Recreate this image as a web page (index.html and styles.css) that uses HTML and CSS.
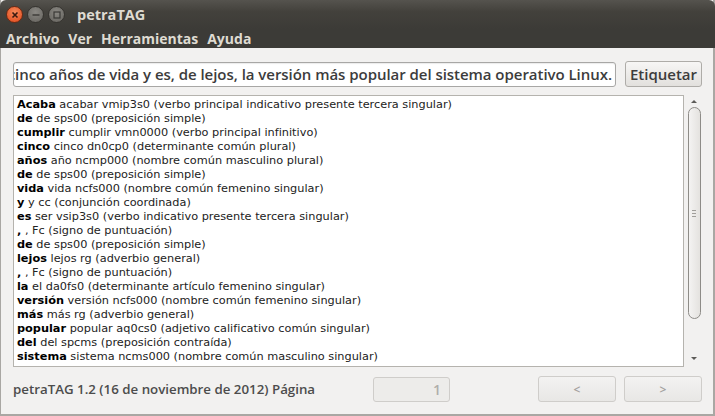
FILE: index.html
```html
<!DOCTYPE html>
<html lang="es">
<head>
  <meta charset="UTF-8">
  <title>petraTAG</title>
  <link rel="stylesheet" href="styles.css">
</head>
<body>
  <div class="window">
    <div class="titlebar">
      <div class="controls">
        <span class="ctl close">
          <svg width="8" height="8" viewBox="0 0 8 8"><path d="M1.5 1.5 L6.5 6.5 M6.5 1.5 L1.5 6.5" stroke="#3a1a10" stroke-width="1.6"/></svg>
        </span>
        <span class="ctl">
          <svg width="8" height="8" viewBox="0 0 8 8"><path d="M0.5 4 H7.5" stroke="#3a3936" stroke-width="1.4"/></svg>
        </span>
        <span class="ctl">
          <svg width="8" height="8" viewBox="0 0 8 8"><rect x="1" y="1" width="6" height="6" fill="none" stroke="#3a3936" stroke-width="1.2"/></svg>
        </span>
      </div>
      <div class="title">petraTAG</div>
    </div>

    <div class="menubar">
      <span>Archivo</span>
      <span>Ver</span>
      <span>Herramientas</span>
      <span>Ayuda</span>
    </div>

    <div class="content">
      <div class="entry-row">
        <div class="entry"><span>Acaba de cumplir cinco años de vida y es, de lejos, la versión más popular del sistema operativo Linux.</span></div>
        <button class="btn">Etiquetar</button>
      </div>

      <div class="text-row">
        <div class="textview">
          <div><b>Acaba</b> acabar vmip3s0 (verbo principal indicativo presente tercera singular)</div>
          <div><b>de</b> de sps00 (preposición simple)</div>
          <div><b>cumplir</b> cumplir vmn0000 (verbo principal infinitivo)</div>
          <div><b>cinco</b> cinco dn0cp0 (determinante común plural)</div>
          <div><b>años</b> año ncmp000 (nombre común masculino plural)</div>
          <div><b>de</b> de sps00 (preposición simple)</div>
          <div><b>vida</b> vida ncfs000 (nombre común femenino singular)</div>
          <div><b>y</b> y cc (conjunción coordinada)</div>
          <div><b>es</b> ser vsip3s0 (verbo indicativo presente tercera singular)</div>
          <div><b>,</b> , Fc (signo de puntuación)</div>
          <div><b>de</b> de sps00 (preposición simple)</div>
          <div><b>lejos</b> lejos rg (adverbio general)</div>
          <div><b>,</b> , Fc (signo de puntuación)</div>
          <div><b>la</b> el da0fs0 (determinante artículo femenino singular)</div>
          <div><b>versión</b> versión ncfs000 (nombre común femenino singular)</div>
          <div><b>más</b> más rg (adverbio general)</div>
          <div><b>popular</b> popular aq0cs0 (adjetivo calificativo común singular)</div>
          <div><b>del</b> del spcms (preposición contraída)</div>
          <div><b>sistema</b> sistema ncms000 (nombre común masculino singular)</div>
        </div>
        <div class="scrollbar">
          <span class="arrow up"></span>
          <div class="slider"><span class="grip"></span></div>
          <span class="arrow down"></span>
        </div>
      </div>

      <div class="footer">
        <div class="status">petraTAG 1.2 (16 de noviembre de 2012) Página</div>
        <div class="spin">1</div>
        <div class="nav">
          <button class="btn nav-btn">&lt;</button>
          <button class="btn nav-btn">&gt;</button>
        </div>
      </div>
    </div>
  </div>
</body>
</html>
```

FILE: styles.css
```css
* {
  margin: 0;
  padding: 0;
  box-sizing: border-box;
}

body {
  width: 715px;
  height: 416px;
  background: #f2f1f0;
  font-family: 'Open Sans', 'DejaVu Sans', sans-serif;
  overflow: hidden;
}

.window {
  width: 715px;
  height: 416px;
  display: flex;
  flex-direction: column;
  border-left: 1px solid #a9a7a3;
  border-right: 2px solid #a9a7a3;
  border-bottom: 2px solid #a9a7a3;
  background: #f2f1f0;
}

.titlebar {
  height: 29px;
  display: flex;
  align-items: center;
  background: linear-gradient(#55534e, #43413c 40%, #3c3b37);
  border-radius: 6px 6px 0 0;
  color: #dfdbd2;
  margin-left: -1px;
  margin-right: -2px;
  padding-left: 6px;
}

.controls {
  display: flex;
  gap: 4px;
}

.ctl {
  width: 17px;
  height: 17px;
  border-radius: 50%;
  display: flex;
  align-items: center;
  justify-content: center;
  background: radial-gradient(circle at 50% 35%, #8a8883, #64625d);
  border: 1px solid #35332f;
}

.ctl.close {
  background: radial-gradient(circle at 50% 35%, #f58a5a, #e0471a);
  border-color: #6a2a14;
}

.title {
  margin-left: 12px;
  font-size: 14.5px;
  font-weight: 700;
}

.menubar {
  height: 19px;
  display: flex;
  align-items: center;
  gap: 9px;
  padding-left: 6px;
  background: #3c3b37;
  color: #dfdbd2;
  font-size: 14px;
  font-weight: 700;
  margin-left: -1px;
  margin-right: -2px;
}

.content {
  flex: 1;
  display: flex;
  flex-direction: column;
  padding: 13px 11px 0 12px;
}

.entry-row {
  display: flex;
  align-items: center;
  gap: 9px;
}

.entry {
  flex: 1;
  height: 25px;
  border: 1px solid #a8a7a5;
  border-radius: 3px;
  background: #fff;
  box-shadow: inset 0 1px 1px rgba(0, 0, 0, 0.08);
  overflow: hidden;
  display: flex;
  justify-content: flex-end;
  align-items: center;
  padding-right: 3px;
  font-size: 15px;
  font-weight: 600;
  letter-spacing: -0.04px;
  color: #3c3c3c;
  white-space: nowrap;
}

.btn {
  width: 77px;
  height: 26px;
  border: 1px solid #aeaca8;
  border-radius: 3px;
  background: linear-gradient(#f7f6f5, #e2e0dd);
  font-family: inherit;
  font-size: 15px;
  font-weight: 600;
  color: #3c3c3c;
}

.text-row {
  display: flex;
  margin-top: 8px;
}

.textview {
  flex: 1;
  height: 272px;
  border: 1px solid #b5b3ae;
  background: #fff;
  padding: 2px 3px;
  font-family: 'DejaVu Sans', Verdana, sans-serif;
  font-size: 11.3px;
  line-height: 14px;
  color: #222;
  overflow: hidden;
  white-space: nowrap;
}

.textview b {
  color: #000;
}

.scrollbar {
  width: 16px;
  margin-left: 2px;
  display: flex;
  flex-direction: column;
  align-items: center;
}

.arrow {
  width: 0;
  height: 0;
  border-left: 3px solid transparent;
  border-right: 3px solid transparent;
}

.arrow.up {
  margin-top: 5px;
  border-bottom: 3px solid #5c5b58;
}

.arrow.down {
  margin-top: 38px;
  border-top: 3px solid #5c5b58;
}

.slider {
  margin-top: 4px;
  width: 13px;
  height: 212px;
  border: 1px solid #8e8c88;
  border-radius: 7px;
  background: linear-gradient(90deg, #f4f3f2, #e4e2df);
  display: flex;
  align-items: center;
  justify-content: center;
}

.grip {
  width: 4px;
  height: 7px;
  border-top: 1px solid #a09e9a;
  border-bottom: 1px solid #a09e9a;
  background: linear-gradient(transparent 2px, #a09e9a 2px, #a09e9a 3px, transparent 3px);
}

.footer {
  display: flex;
  align-items: center;
  margin-top: 9px;
}

.status {
  font-size: 13.3px;
  font-weight: 600;
  color: #4c4c4c;
  width: 360px;
}

.spin {
  width: 77px;
  height: 25px;
  border: 1px solid #cfcdca;
  border-radius: 3px;
  background: #edecea;
  color: #b0aeab;
  font-size: 14px;
  font-weight: 600;
  text-align: right;
  padding: 2px 8px 0 0;
}

.nav {
  margin-left: auto;
  display: flex;
  gap: 8px;
}

.nav-btn {
  width: 78px;
  height: 26px;
  border-color: #cfcdca;
  background: linear-gradient(#f3f2f1, #e8e7e5);
  color: #a3a19d;
  font-size: 12px;
}
```
